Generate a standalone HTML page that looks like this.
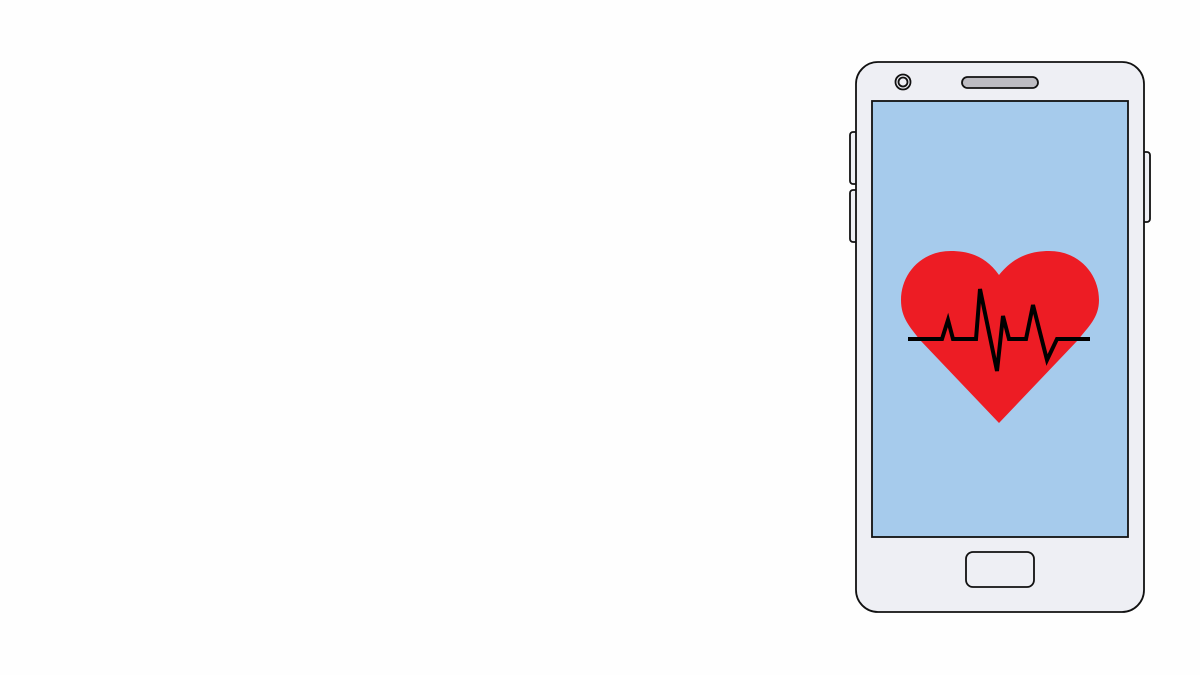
<!DOCTYPE html>
<html><head><style>html,body{margin:0;padding:0;background:#fefefe;}svg{display:block}</style></head>
<body>
<svg width="1200" height="675" viewBox="0 0 1200 675" xmlns="http://www.w3.org/2000/svg">
<rect x="0" y="0" width="1200" height="675" fill="#fefefe"/>
<g stroke="#111" stroke-width="1.8" fill="#eeeff4">
<rect x="850" y="132" width="10" height="52" rx="3"/>
<rect x="850" y="190" width="10" height="52" rx="3"/>
<rect x="1140" y="152" width="10" height="70" rx="3"/>
<rect x="856" y="62" width="288" height="550" rx="22"/>
<rect x="872" y="101" width="256" height="436" fill="#a6cbec"/>
<circle cx="903" cy="82" r="7.5"/>
<circle cx="903" cy="82" r="4.5"/>
<rect x="962" y="77" width="76" height="11" rx="5.5" fill="#bdbcc2"/>
<rect x="966" y="552" width="68" height="35" rx="7"/>
</g>
<path d="M999 275 C985 255 967 251 951 251 C920 251 901 275 901 300 C901 318 910 327 920 340 L999 423 L1078 340 C1088 327 1099 318 1099 300 C1099 275 1080 251 1049 251 C1033 251 1015 255 999 275 Z" fill="#ed1c24"/>
<polyline points="908,339 942,339 948,320 953,339 976,339 980,289 997,371 1003,316 1009,339 1026,339 1033,305 1047,360 1057,339 1090,339" fill="none" stroke="#000" stroke-width="4" stroke-linejoin="miter"/>
</svg>
</body></html>
